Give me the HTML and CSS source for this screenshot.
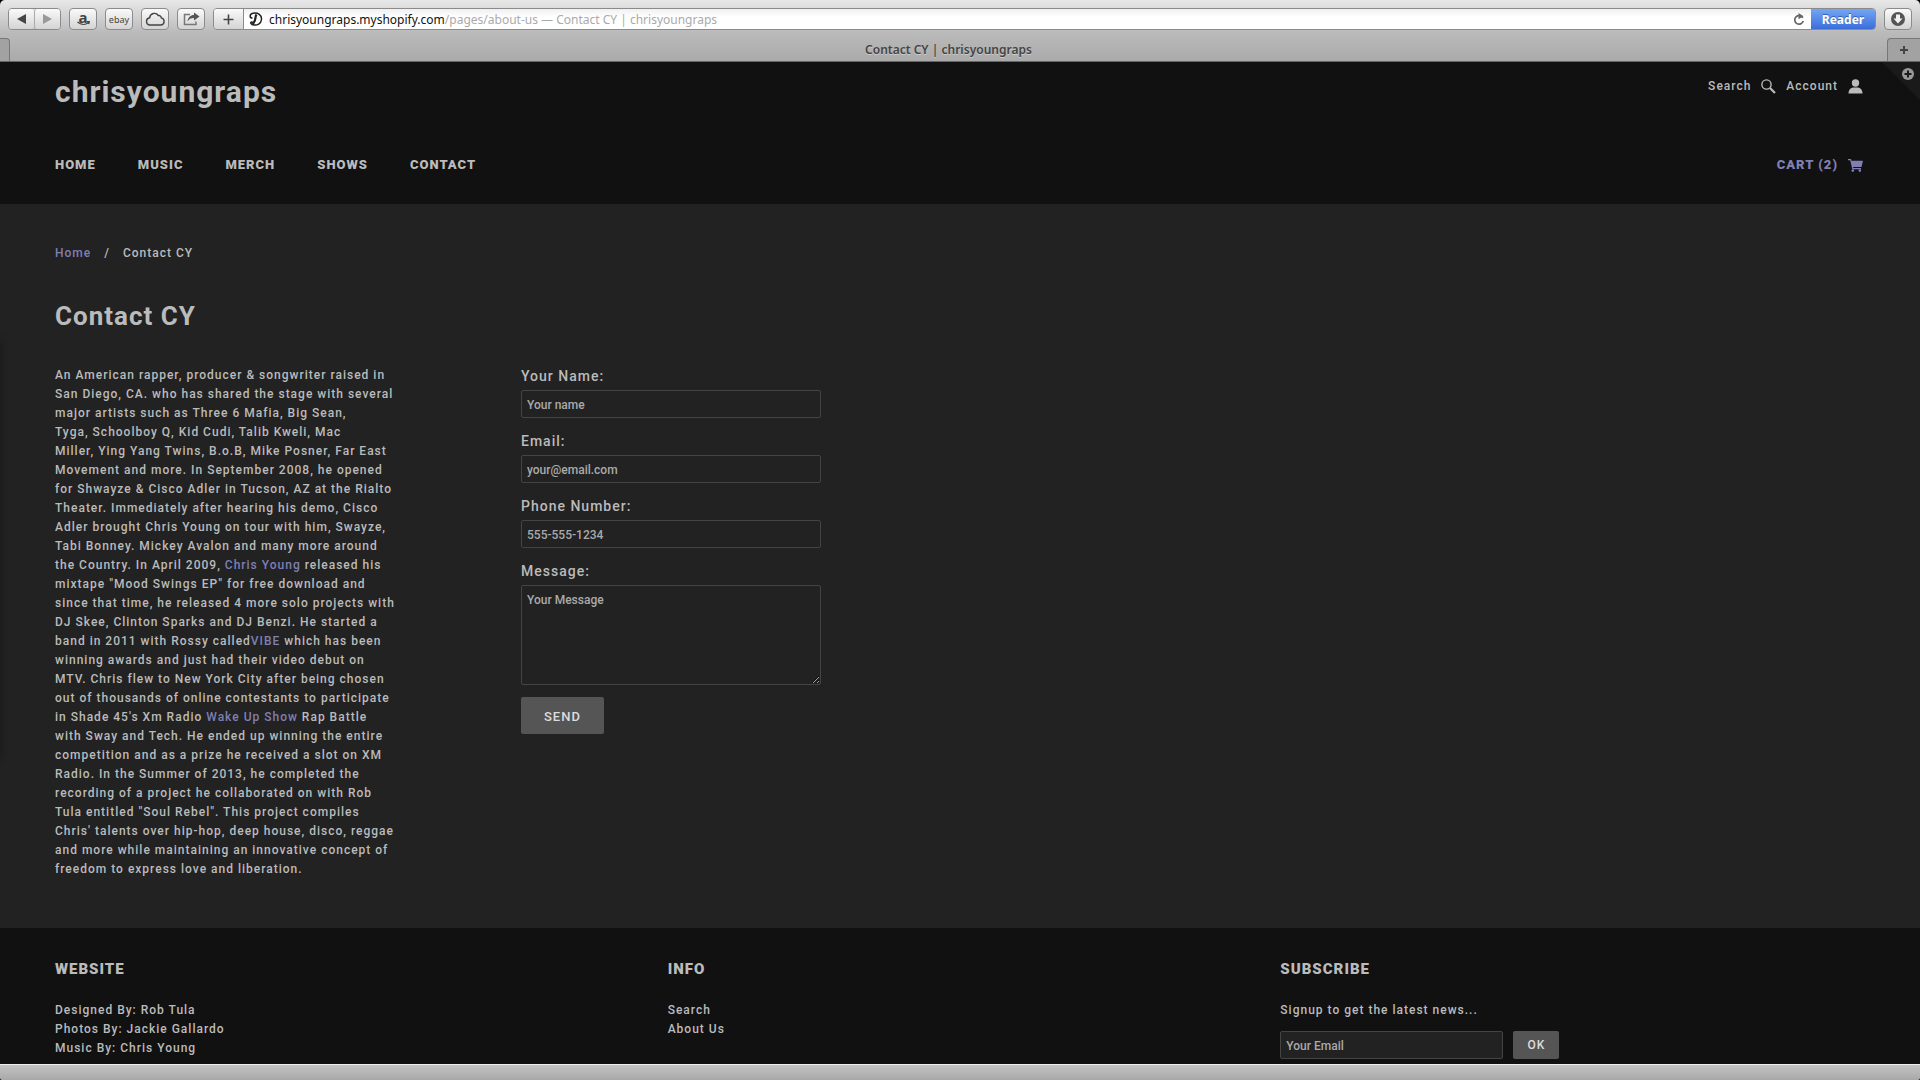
FILE: index.html
```html
<!DOCTYPE html>
<html lang="en">
  <head>
    <meta charset="UTF-8" />
    <meta name="viewport" content="width=device-width, initial-scale=1" />
    <title>Contact CY | chrisyoungraps</title>
    <link rel="stylesheet" href="styles.css">
  </head>
  <body>
    <div class="window">
      <!-- Browser toolbar -->
      <div class="toolbar">
        <div class="btn-group">
          <button class="tool-btn" aria-label="Back">
            <svg width="9" height="10" viewBox="0 0 9 10"><path d="M9 0v10L0 5z" fill="#444" /></svg>
          </button>
          <button class="tool-btn" aria-label="Forward">
            <svg width="9" height="10" viewBox="0 0 9 10"><path d="M0 0v10l9-5z" fill="#999" /></svg>
          </button>
        </div>
        <button class="tool-btn single" aria-label="Amazon">
          <span class="amazon">a</span>
          <svg class="smile" width="13" height="5" viewBox="0 0 13 5"><path d="M.5 1c3.500 3 8 3 11 .5M9.500 .7l2.800-.2-.6 2.600" fill="none" stroke="#444" stroke-width="1.300" /></svg>
        </button>
        <button class="tool-btn single ebay">ebay</button>
        <button class="tool-btn single" aria-label="iCloud Tabs">
          <svg width="20" height="14" viewBox="0 0 20 14"><path d="M4.500 13h11a3.600 3.600 0 0 0 .8-7.100A2.700 2.700 0 0 0 13.300 3.500 4.700 4.700 0 0 0 4.700 5.700 3.700 3.700 0 0 0 4.500 13z" fill="none" stroke="#444" stroke-width="1.400" /></svg>
        </button>
        <button class="tool-btn single" aria-label="Share">
          <svg width="17" height="14" viewBox="0 0 17 14"><path d="M7 2.500H1.500v10H13V9.500" fill="none" stroke="#777" stroke-width="1.500" /><path d="M11 .5L16.500 4.500 11 8.500V6C8 6 6 7 4.500 9.500 5 5.500 7.500 3 11 3z" fill="#555" /></svg>
        </button>
        <div class="address">
          <button class="tool-btn add" aria-label="Add bookmark">
            <svg width="11" height="11" viewBox="0 0 11 11"><path d="M5.500 .5v10M.5 5.500h10" stroke="#444" stroke-width="1.600" /></svg>
          </button>
          <div class="url">
            <svg width="14" height="14" viewBox="0 0 14 14" fill="none" stroke="#222"><path d="M3.500 6C.5 6 0 2 4 1.200 9 .3 13 3 12.500 7.500 12 12 8 13.500 5 13 2 12.500 .8 10.500 2.500 10 4 10 4 11.500 5 12" stroke-width="1.500" /><path d="M7.500 2.500C5.500 5 7.500 8 4.500 11" stroke-width="2.200" /></svg>
            <p><span class="host">chrisyoungraps.myshopify.com</span>/pages/about-us — Contact CY | chrisyoungraps</p>
            <button class="reload" aria-label="Reload">
              <svg width="12" height="13" viewBox="0 0 12 13"><path d="M9.800 4.800A4.300 4.300 0 1 0 10.200 8" fill="none" stroke="#666" stroke-width="1.700" /><path d="M5.500 0l5 3.200-5 3z" fill="#666" /></svg>
            </button>
          </div>
          <button class="reader">Reader</button>
        </div>
        <button class="tool-btn single" aria-label="Downloads">
          <svg width="14" height="14" viewBox="0 0 14 14"><circle cx="7" cy="7" r="7" fill="#555" /><path d="M5 2.500h4v4h2.500L7 11.500 2.500 6.500H5z" fill="#f4f4f4" /></svg>
        </button>
      </div>

      <!-- Tab bar -->
      <div class="tabs">
        <span class="tab-edge"></span>
        <span class="tab-title">Contact CY | chrisyoungraps</span>
        <button class="new-tab" aria-label="New tab">
          <svg width="8" height="8" viewBox="0 0 8 8"><path d="M4 0v8M0 4h8" stroke="#444" stroke-width="2" /></svg>
        </button>
      </div>

      <!-- Shop page -->
      <div class="page">
        <header class="site-header">
          <div class="header-top">
            <a class="logo" href="#">chrisyoungraps</a>
            <div class="account-links">
              <a href="#">Search
                <svg width="15" height="15" viewBox="0 0 15 15" fill="none" stroke="currentColor"><circle cx="5.500" cy="5.500" r="4.600" stroke-width="1.400" /><path d="M9 9l5 5" stroke-width="2.200" /></svg>
              </a>
              <a href="#">Account
                <svg width="15" height="15" viewBox="0 0 15 15" fill="currentColor"><circle cx="7.500" cy="4" r="3.700" /><path d="M.5 14.500C.5 10.500 3 8.700 5 8.500h5c2 .2 4.500 2 4.500 6z" /></svg>
              </a>
            </div>
          </div>
          <div class="header-nav">
            <nav>
              <a href="#">HOME</a>
              <a href="#">MUSIC</a>
              <a href="#">MERCH</a>
              <a href="#">SHOWS</a>
              <a href="#">CONTACT</a>
            </nav>
            <a class="cart" href="#">CART (2)
              <svg width="15" height="13" viewBox="0 0 15 13" fill="currentColor"><path d="M0 0h3l.5 1.700H15L13.500 8H5l.3 1H13v1.200H4.300L2.200 1.200H0z" /><circle cx="4.800" cy="11.600" r="1.300" /><circle cx="11.800" cy="11.600" r="1.300" /></svg>
            </a>
          </div>
          <button class="corner" aria-label="Open toolbar">
            <svg width="38" height="38" viewBox="0 0 38 38"><path d="M0 0h38v38z" fill="#1a1a1a" /><circle cx="26" cy="12" r="6" fill="#999" /><path d="M26 8.500v7M22.500 12h7" stroke="#1a1a1a" stroke-width="2" /></svg>
          </button>
        </header>

        <main>
          <div class="breadcrumb">
            <a href="#">Home</a>
            <span>/</span>
            <span>Contact CY</span>
          </div>
          <h1>Contact CY</h1>
          <div class="columns">
            <p class="bio">
              An American rapper, producer &amp; songwriter raised in San Diego, CA. who has shared the stage with several major artists such as Three 6 Mafia, Big Sean, Tyga,&nbsp;Schoolboy Q, Kid Cudi, Talib Kweli, Mac Miller,&nbsp;Ying Yang Twins, B.o.B, Mike Posner, Far East Movement and more. In September 2008, he opened for Shwayze &amp; Cisco Adler in Tucson, AZ at the Rialto Theater. Immediately after hearing his demo, Cisco Adler brought Chris Young on tour with him, Swayze, Tabi Bonney. Mickey Avalon and many more around the Country. In April 2009, <a href="#">Chris Young</a> released his mixtape "Mood Swings EP" for free download and since that time, he released 4 more solo projects with DJ Skee, Clinton Sparks and DJ Benzi. He started a band in 2011 with Rossy called<a href="#">VIBE</a> which has been winning awards and just had their video debut on MTV. Chris flew to New York City after being chosen out of thousands of online contestants to participate in Shade 45's Xm Radio <a href="#">Wake Up Show</a> Rap Battle with Sway and Tech. He ended up winning the entire competition and as a prize he received a slot on XM Radio. In the Summer of 2013, he completed the recording of a project he collaborated on with Rob Tula entitled "Soul Rebel". This project compiles Chris' talents over hip-hop, deep house, disco, reggae and more while maintaining an innovative concept of freedom to express love and liberation.
            </p>
            <form class="contact-form">
              <label for="name">Your Name:</label>
              <input type="text" id="name" placeholder="Your name" />
              <label for="email">Email:</label>
              <input type="email" id="email" placeholder="your@email.com" />
              <label for="phone">Phone Number:</label>
              <input type="tel" id="phone" placeholder="555-555-1234" />
              <label for="message">Message:</label>
              <textarea id="message" placeholder="Your Message"></textarea>
              <button class="btn send" type="submit">SEND</button>
            </form>
          </div>
        </main>

        <footer>
          <div>
            <h3>WEBSITE</h3>
            <p>Designed By: Rob Tula</p>
            <p>Photos By: Jackie Gallardo</p>
            <p>Music By: Chris Young</p>
          </div>
          <div>
            <h3>INFO</h3>
            <ul>
              <li><a href="#">Search</a></li>
              <li><a href="#">About Us</a></li>
            </ul>
          </div>
          <div>
            <h3>SUBSCRIBE</h3>
            <label for="signup">Signup to get the latest news...</label>
            <form class="signup">
              <input type="email" id="signup" placeholder="Your Email" />
              <button class="btn" type="submit">OK</button>
            </form>
          </div>
        </footer>
      </div>

      <div class="status-bar"></div>
    </div>
  </body>
</html>
```
FILE: styles.css
```css
/* Reset & Base */
* {
  box-sizing: border-box;
  margin: 0;
  padding: 0;
}
body {
  background: #000;
  font-family: Roboto, Arial, sans-serif;
  font-size: 12px;
  line-height: 19px;
  color: #bbb;
}
button {
  font: inherit;
  color: inherit;
  border: none;
  background: none;
  cursor: pointer;
}
a {
  color: #7f7fb2;
  text-decoration: none;
}
ul {
  list-style: none;
}
svg {
  display: block;
  flex: none;
}
.window {
  height: 100vh;
  display: flex;
  flex-direction: column;
  border-radius: 5px 5px 2px 2px;
  overflow: hidden;
}

/* Browser toolbar */
.toolbar,
.tabs {
  font-family: "Noto Sans", "Open Sans", sans-serif;
  color: #aaa;
}
.toolbar {
  display: flex;
  gap: 8px;
  padding: 8px 8px 1px;
  background: linear-gradient(#e8e8e8, #bdbdbd);
}
.btn-group,
.tool-btn.single,
.address {
  height: 22px;
  border: 1px solid #8b8b8b;
  border-radius: 4px;
}
.btn-group {
  display: flex;
  width: 53px;
}
.tool-btn {
  display: flex;
  flex: 1;
  align-items: center;
  justify-content: center;
  background: linear-gradient(#fafafa, #d4d4d4);
  color: #444;
}
.btn-group .tool-btn {
  border-radius: 3px;
}
.btn-group .tool-btn + .tool-btn {
  border-left: 1px solid #aaa;
}
.tool-btn.single {
  flex: none;
  width: 28px;
  position: relative;
}
.amazon {
  font: bold 15px/14px "Noto Sans", sans-serif;
  padding-bottom: 4px;
}
.smile {
  position: absolute;
  left: 7px;
  bottom: 3px;
}
.ebay {
  font-size: 9px;
}
.address {
  display: flex;
  flex: 1;
  overflow: hidden;
}
.tool-btn.add {
  flex: none;
  width: 30px;
  border-right: 1px solid #8b8b8b;
}
.url {
  display: flex;
  flex: 1;
  align-items: center;
  gap: 6px;
  padding: 0 6px 0 5px;
  background: linear-gradient(#f0f0f0, #fff 40%);
}
.url p {
  flex: 1;
}
.url .host {
  color: #111;
}
.reader {
  width: 64px;
  background: linear-gradient(#74a5f3, #3c6edb);
  color: #fff;
  font-weight: bold;
  text-shadow: 0 -1px #3560b5;
}

/* Tab bar */
.tabs {
  display: flex;
  align-items: flex-end;
  height: 31px;
  background: linear-gradient(#bbb, #aaa);
  border-bottom: 1px solid #666;
}
.tab-edge,
.new-tab {
  height: 23px;
  border-top: 1px solid #777;
  background: #a2a2a2;
}
.tab-edge {
  width: 10px;
  border-right: 1px solid #777;
  border-radius: 0 4px 0 0;
}
.tab-title {
  flex: 1;
  text-align: center;
  line-height: 23px;
  font-weight: 600;
  color: #444;
  text-shadow: 0 1px #ccc;
}
.new-tab {
  display: flex;
  align-items: center;
  justify-content: center;
  width: 33px;
  border-left: 1px solid #777;
  border-radius: 4px 0 0 0;
}

/* Shop page */
.page {
  flex: 1;
  min-height: 0;
  position: relative;
  overflow: hidden;
  background: #222;
  font-weight: 500;
  letter-spacing: 1px;
}
/* Faint shadow of the panel hidden off the left edge */
.page::before {
  content: "";
  position: absolute;
  left: -12px;
  top: 280px;
  width: 10px;
  height: 416px;
  box-shadow: 0 0 8px #111;
}
.site-header {
  position: relative;
  padding: 10px 57px 29px 55px;
  background: #111;
}
.site-header a {
  color: #bbb;
}
.header-top,
.header-nav {
  display: flex;
  justify-content: space-between;
}
.header-top {
  height: 83px;
}
.logo {
  font-size: 30px;
  line-height: 40px;
  font-weight: 700;
}
.account-links,
.account-links a,
.cart {
  display: flex;
  gap: 10px;
}
.account-links a,
.cart {
  align-items: center;
  height: 28px;
}
.header-nav {
  font-size: 13px;
  line-height: 20px;
  font-weight: 900;
}
.header-nav nav {
  display: flex;
  gap: 42px;
}
.site-header .cart {
  height: 20px;
  color: #7f7fb2;
}
.corner {
  position: absolute;
  top: 0;
  right: 0;
}

/* Main content */
main {
  padding: 40px 55px 49px;
}
.breadcrumb {
  display: flex;
  gap: 13px;
  margin-bottom: 35px;
}
h1 {
  font-size: 26px;
  line-height: 36px;
  font-weight: 700;
  margin-bottom: 31px;
}
.columns {
  display: grid;
  grid-template-columns: minmax(0, 342px) minmax(0, 300px);
  column-gap: 124px;
}
.bio {
  padding-top: 1px;
}
.contact-form {
  display: flex;
  flex-direction: column;
}
.contact-form label {
  font-size: 14px;
  line-height: 23px;
}
input,
textarea {
  font: inherit;
  color: #bbb;
  background: #222;
  border: 1px solid #444;
  border-radius: 2px;
  padding: 5px 5px 3px;
  outline: none;
}
input {
  height: 28px;
}
.contact-form input,
.contact-form textarea {
  margin: 2px 0 12px;
}
textarea {
  height: 100px;
  resize: vertical;
}
::placeholder {
  color: #aaa;
}
.btn {
  background: #555;
  border-radius: 2px;
  color: #ddd;
  letter-spacing: 1px;
}
.send {
  align-self: flex-start;
  padding: 10px 23px 8px;
  font-size: 13px;
}

/* Footer */
footer {
  display: grid;
  grid-template-columns: repeat(3, 1fr);
  column-gap: 28px;
  padding: 30px 55px;
  background: #111;
}
footer a {
  color: #bbb;
}
h3 {
  font-size: 15px;
  line-height: 22px;
  font-weight: 900;
  margin-bottom: 21px;
}
footer label {
  display: block;
}
.signup {
  display: flex;
  gap: 10px;
  margin-top: 11px;
}
.signup input {
  width: 223px;
}
.signup .btn {
  width: 46px;
}

.status-bar {
  height: 16px;
  border-top: 1px solid #eee;
  background: linear-gradient(#c4c4c4, #a8a8a8);
}
```
